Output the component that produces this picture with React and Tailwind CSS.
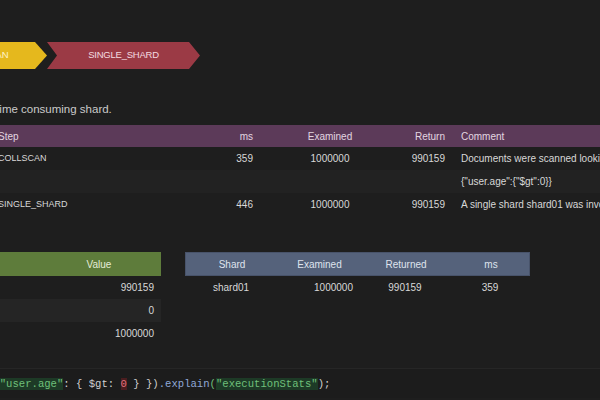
import React from "react";

const steps = [
  { step: "COLLSCAN", ms: "359", examined: "1000000", ret: "990159", comment: "Documents were scanned looking for" },
  { step: "", ms: "", examined: "", ret: "", comment: '{"user.age":{"$gt":0}}', alt: true },
  { step: "SINGLE_SHARD", ms: "446", examined: "1000000", ret: "990159", comment: "A single shard shard01 was involved" },
];

const stats = [
  { name: "nReturned", value: "990159" },
  { name: "totalKeysExamined", value: "0", alt: true },
  { name: "totalDocsExamined", value: "1000000" },
];

const cols = "grid grid-cols-[214px_60px_140px_52px_400px]";
const shardCols = "grid grid-cols-[92px_83px_90px_80px]";

const App = () => {
  return (
    <div className="w-[600px] h-[400px] overflow-hidden bg-[#1e1e1e] text-[#d8d8d8] font-['Liberation_Sans',Arial,sans-serif]">
      {/* STAGES */}
      <div className="flex pt-[42px] h-[69px] -ml-[60px]">
        <div className="w-[107px] h-[27px] bg-[#e5b81d] [clip-path:polygon(0_0,calc(100%-12px)_0,100%_50%,calc(100%-12px)_100%,0_100%)] flex items-center pl-[19px] text-[9.5px] text-[#fff4cc] tracking-tight">
          COLLSCAN
        </div>
        <div className="w-[153px] h-[27px] bg-[#9b3a45] [clip-path:polygon(0_0,calc(100%-11px)_0,100%_50%,calc(100%-11px)_100%,0_100%,10px_50%)] flex items-center justify-center text-[9.5px] text-[#f3dbe0] tracking-tight">
          SINGLE_SHARD
        </div>
      </div>

      <p className="mt-[32px] -ml-[55px] text-[11.5px] leading-[16px] text-[#cacaca] whitespace-nowrap">
        The most time consuming shard.
      </p>

      {/* STEPS TABLE */}
      <div className="mt-[8px] -ml-[14px] w-[866px] text-[10px]">
        <div className={`${cols} h-[22px] items-center bg-[#5c3a59] text-[#e2d6e0]`}>
          <span className="pl-3">Step</span>
          <span className="text-right pr-[7px]">ms</span>
          <span className="text-center">Examined</span>
          <span className="text-right pr-[7px]">Return</span>
          <span className="pl-[9px]">Comment</span>
        </div>
        {steps.map((s, i) => (
          <div
            key={i}
            className={`${cols} h-[23px] items-center ${s.alt ? "bg-[#222222]" : ""}`}
          >
            <span className="pl-3 text-[9px]">{s.step}</span>
            <span className="text-right pr-[7px]">{s.ms}</span>
            <span className="text-center">{s.examined}</span>
            <span className="text-right pr-[7px]">{s.ret}</span>
            <span className="pl-[9px] whitespace-nowrap">{s.comment}</span>
          </div>
        ))}
      </div>

      {/* STATS + SHARDS */}
      <div className="flex mt-[36px] text-[10px]">
        <div className="-ml-[200px] w-[361px]">
          <div className="grid grid-cols-[237px_124px] h-[24px] items-center bg-[#5e7c3b] text-[#e4ecd8]">
            <span className="pl-3">Metric</span>
            <span className="text-center">Value</span>
          </div>
          {stats.map((r) => (
            <div
              key={r.name}
              className={`grid grid-cols-[237px_124px] h-[23px] items-center ${r.alt ? "bg-[#252525]" : ""}`}
            >
              <span className="pl-3">{r.name}</span>
              <span className="text-right pr-[7px]">{r.value}</span>
            </div>
          ))}
        </div>

        <div className="ml-[24px] w-[345px]">
          <div className={`${shardCols} h-[24px] items-center bg-[#55627b] text-[#dfe4ee] border border-[#48536a]`}>
            <span className="text-center">Shard</span>
            <span className="text-center">Examined</span>
            <span className="text-center">Returned</span>
            <span className="text-center">ms</span>
          </div>
          <div className={`${shardCols} h-[23px] items-center`}>
            <span className="text-center">shard01</span>
            <span className="text-right pr-[7px]">1000000</span>
            <span className="text-center">990159</span>
            <span className="text-center">359</span>
          </div>
        </div>
      </div>

      {/* QUERY */}
      <div className="mt-[23px] h-[30px] border-t border-[#262626] bg-[#1c1c1c] flex items-center pt-[2px]">
        <code className="-ml-[102px] whitespace-nowrap text-[10.6px] font-['Liberation_Mono',monospace] text-[#d0d0d0]">
          <span>db.users.find({"{ "}</span>
          <span className="bg-[#1d3a26] text-[#6fc07a]">"user.age"</span>
          <span>: {"{ "}$gt: </span>
          <span className="bg-[#4a1d1f] text-[#e0707a]">0</span>
          <span> {"} })"}</span>
          <span className="text-[#8fa8d6]">.explain</span>
          <span className="text-[#6fc07a]">(</span>
          <span className="bg-[#1d3a26] text-[#6fc07a]">"executionStats"</span>
          <span>);</span>
        </code>
      </div>
    </div>
  );
};

export default App;
